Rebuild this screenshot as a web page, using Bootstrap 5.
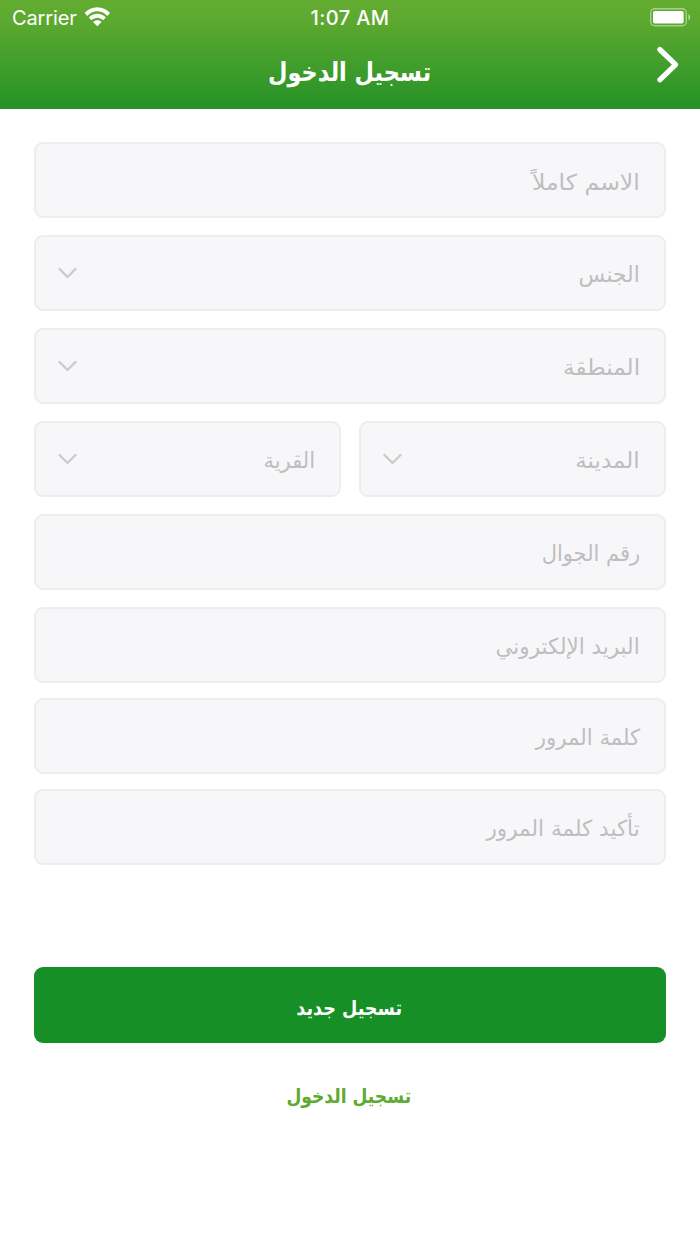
<!DOCTYPE html>
<html lang="ar" dir="rtl">
<head>
<meta charset="utf-8">
<meta name="viewport" content="width=device-width, initial-scale=1">
<title>تسجيل الدخول</title>
<link href="https://cdn.jsdelivr.net/npm/bootstrap@5.3.0/dist/css/bootstrap.min.css" rel="stylesheet">
<style>
body{font-family:"DejaVu Sans",sans-serif;background:#fff;overflow:hidden}
.screen{width:700px;height:1244px}
.top-area{height:108.5px;background:linear-gradient(#62ac31 0,#5da92f 20px,#259227 100%);color:#fff}
.status{height:36px;font-family:Inter,sans-serif;font-size:20px;line-height:36px}
.status>*{flex:1 1 0}
.carrier{letter-spacing:-.12px}
.clock{letter-spacing:.4px}
.wifi{margin:-3px 0 0 7px}
.battery{margin:-2px 1px 0 0}
.title-text{font-size:26px;font-weight:700;line-height:36px;padding-top:18px}
.back{top:44px;left:654px;line-height:0}
.fields{padding:33.5px 34px 0;gap:17px}
.field{height:76px;background:#f7f7f9;border:2px solid #ededee;border-radius:9px;padding:3px 24px 0;color:#bebebf;font-size:22px}
.first-field{padding-top:5px}
.arrow{width:20px;height:12px;margin:-3px 0 0 -3px}
.pair{gap:18px}
.pair .field{flex:1 1 0}
.fit{display:inline-block;white-space:nowrap;transform-origin:100% 50%;transform:scaleX(var(--sx,1))}
.center-fit{transform-origin:50% 50%}
.tight{margin-top:-1.8px}
.submit{margin:101.8px 34px 0;height:76px;border-radius:9px;background:#168f27;color:#fff;font-size:20px;font-weight:700;border:0;padding:5px 8px 0 6px}
.login{color:#5fab30;font-size:20px;font-weight:700;margin-top:38px;padding-right:2px}
.submit .fit,.login .fit{transform-origin:50% 50%}
.login{padding:0 2px 0 0}
</style>
</head>
<body>
<svg class="d-none"><symbol id="down" viewBox="0 0 20 12"><path d="M2.500 2l8 8 8-8" fill="none" stroke="#cbcbcc" stroke-width="2.400" stroke-linecap="round" stroke-linejoin="round"/></symbol></svg>
<main class="screen d-flex flex-column">
<header class="top-area position-relative">
<div class="status d-flex" dir="ltr">
<div class="d-flex align-items-center ps-2"><span class="carrier ms-1">Carrier</span><svg class="wifi" width="28" height="21" viewBox="84 6 28 21" fill="#fff"><path d="M84.600 12.900C88 9.300 92.400 7.200 97.300 7.200s9.300 2.100 12.700 5.700l-2.700 3C104.700 13 101.200 11.200 97.300 11.200s-7.400 1.800-10 4.700z"/><path d="M88.800 17.400c2.300-2.300 5.200-3.600 8.500-3.600s6.200 1.300 8.500 3.600l-2.700 2.900c-1.600-1.600-3.600-2.500-5.800-2.500s-4.200.9-5.800 2.500z"/><path d="M93 22c1.200-1.200 2.700-1.800 4.300-1.800s3.100.6 4.300 1.800l-4.300 4.300z"/></svg></div>
<div class="clock text-center fw-medium">1:07 AM</div>
<div class="d-flex justify-content-end align-items-center pe-2"><svg class="battery" width="42" height="20" viewBox="649 7 42 20"><rect x="650.700" y="8.700" width="35.600" height="17" rx="4" fill="none" stroke="#fff" stroke-opacity=".45" stroke-width="1.400"/><rect x="653" y="11" width="30.700" height="12.400" rx="2" fill="#fff"/><path d="M688.400 14v6.300c2.400-1 2.400-5.300 0-6.300z" fill="#fff" fill-opacity=".55"/></svg></div>
</div>
<h1 class="title-text text-center m-0"><span class="fit center-fit" style="--sx:.862">تسجيل الدخول</span></h1>
<a class="back position-absolute" href="#" aria-label="رجوع"><svg width="28" height="42" viewBox="654 44 28 42"><path d="M659.800 49.500l15.800 15.100-15.800 15.200" fill="none" stroke="#fff" stroke-width="5.200" stroke-linecap="round" stroke-linejoin="round"/></svg></a>
</header>
<section class="fields d-flex flex-column">
<div class="field first-field d-flex align-items-center"><span class="fit" style="--sx:1.07">الاسم كاملاً</span></div>
<div class="field d-flex align-items-center justify-content-between"><span class="fit" style="--sx:.99">الجنس</span><svg class="arrow"><use href="#down"/></svg></div>
<div class="field d-flex align-items-center justify-content-between"><span class="fit" style="--sx:1.055">المنطقة</span><svg class="arrow"><use href="#down"/></svg></div>
<div class="pair d-flex"><div class="field d-flex align-items-center justify-content-between"><span class="fit" style="--sx:1.045">المدينة</span><svg class="arrow"><use href="#down"/></svg></div><div class="field d-flex align-items-center justify-content-between"><span class="fit" style="--sx:.955">القرية</span><svg class="arrow"><use href="#down"/></svg></div></div>
<div class="field d-flex align-items-center"><span class="fit" style="--sx:.955">رقم الجوال</span></div>
<div class="field d-flex align-items-center"><span class="fit" style="--sx:.977">البريد الإلكتروني</span></div>
<div class="field tight d-flex align-items-center"><span class="fit" style="--sx:.965">كلمة المرور</span></div>
<div class="field tight d-flex align-items-center"><span class="fit" style="--sx:.978">تأكيد كلمة المرور</span></div>
</section>
<button class="submit" type="button"><span class="fit center-fit" style="--sx:.88">تسجيل جديد</span></button>
<a class="login text-center text-decoration-none" href="#"><span class="fit center-fit" style="--sx:.857">تسجيل الدخول</span></a>
</main>
<script src="https://cdn.jsdelivr.net/npm/bootstrap@5.3.0/dist/js/bootstrap.bundle.min.js"></script>
</body>
</html>
